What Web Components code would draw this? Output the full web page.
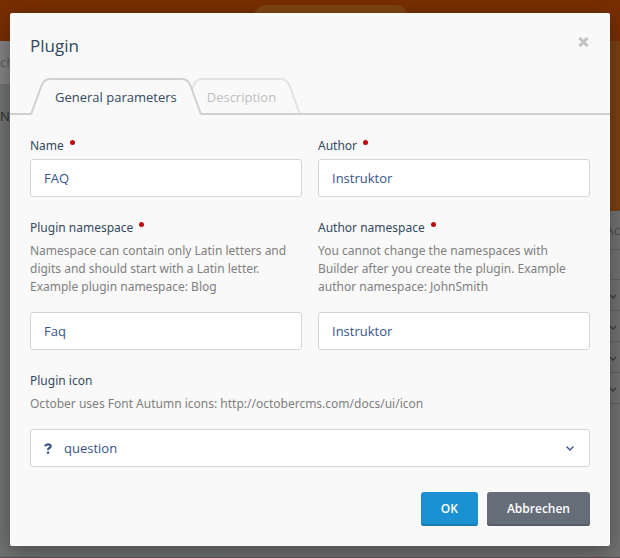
<!DOCTYPE html>
<html lang="en">
<head>
<meta charset="utf-8">
<title>Plugin</title>
<style>
  html, body { margin: 0; min-height: 100%; }
  body { font-family: "Open Sans", "Noto Sans", sans-serif; font-size: 12px; background: #6c6c6c; color: #405261; }
</style>
</head>
<body>
<plugin-page></plugin-page>

<template id="t-page">
  <style>
    :host { display: grid; min-height: 100vh; }
    backend-backdrop, .layer { grid-area: 1 / 1; min-width: 0; }
    .layer { padding: 13px 10px 12px; z-index: 1; }
    form { display: grid; gap: 21px; }
    .row { display: grid; grid-template-columns: 1fr 1fr; gap: 16px; }
  </style>
  <backend-backdrop></backend-backdrop>
  <div class="layer">
    <modal-dialog heading="Plugin">
      <tab-bar slot="tabs">
        <tab-item active>General parameters</tab-item>
        <tab-item>Description</tab-item>
      </tab-bar>
      <form>
        <div class="row">
          <text-field label="Name" value="FAQ" required></text-field>
          <text-field label="Author" value="Instruktor" required></text-field>
        </div>
        <div class="row">
          <text-field label="Plugin namespace" value="Faq" required
            help="Namespace can contain only Latin letters and digits and should start with a Latin letter. Example plugin namespace: Blog"></text-field>
          <text-field label="Author namespace" value="Instruktor" required
            help="You cannot change the namespaces with Builder after you create the plugin. Example author namespace: JohnSmith"></text-field>
        </div>
        <icon-field label="Plugin icon" value="question"
          help="October uses Font Autumn icons: http://octobercms.com/docs/ui/icon"></icon-field>
      </form>
      <action-button slot="actions" kind="primary">OK</action-button>
      <action-button slot="actions">Abbrechen</action-button>
    </modal-dialog>
  </div>
</template>

<template id="t-backdrop">
  <style>
    :host { display: grid; grid-template: 41px 1fr 1px / 228px 1fr; overflow: hidden; color: #3c3f3f; }
    header { grid-column: 1 / 3; background: #782f00; display: flex; justify-content: center; align-items: end; padding-left: 42px; }
    .nav { width: 154px; height: 36px; border-radius: 12px 12px 0 0; background: #7e4412; }
    aside { background: #707372; }
    .search { height: 43px; line-height: 42px; background: #838383; color: #5c5c5c; font-size: 13px; }
    .name { line-height: 64px; font-size: 13px; color: #2e3030; }
    section { background: #727272; }
    .banner { height: 170px; background: #7a4113; }
    .cell { height: 30px; border-bottom: 1px solid #626464; display: flex; justify-content: flex-end; align-items: center; }
    .head { height: 38px; font-size: 13px; color: #4b4d4d; }
    .blank { height: 29px; }
    svg { width: 8px; height: 6px; margin: 3px 3px 0 0; fill: none; stroke: #3c3f3f; stroke-width: 1.4; }
    footer { grid-column: 1 / 3; background: #5e4c57; }
  </style>
  <header><div class="nav"></div></header>
  <aside><div class="search">ch</div><div class="name">N</div></aside>
  <section>
    <div class="banner"></div>
    <div class="cell head">Ac</div>
    <div class="cell blank"></div>
    <div class="cell"><svg viewBox="0 0 8 6"><path d="M1 1l3 3 3-3"/></svg></div>
    <div class="cell"><svg viewBox="0 0 8 6"><path d="M1 1l3 3 3-3"/></svg></div>
    <div class="cell"><svg viewBox="0 0 8 6"><path d="M1 1l3 3 3-3"/></svg></div>
    <div class="cell"><svg viewBox="0 0 8 6"><path d="M1 1l3 3 3-3"/></svg></div>
  </section>
  <footer></footer>
</template>

<template id="t-modal">
  <style>
    :host { display: block; background: #f9f9f9; border-radius: 2px; box-shadow: 0 6px 22px rgba(0,0,0,.35); }
    header { display: flex; justify-content: space-between; align-items: flex-start; padding: 20px 20px 0; height: 45px; }
    h1 { margin: 0; font-size: 17px; line-height: 26px; font-weight: 400; color: #34495e; }
    .close { border: 0; background: none; padding: 3px 1px; line-height: 0; }
    .close svg { width: 11px; height: 12px; stroke: #c4c4c4; stroke-width: 3; }
    .body { padding: 21px 20px 0; }
    footer { display: flex; justify-content: flex-end; gap: 9px; padding: 25px 20px 20px; }
  </style>
  <header><h1></h1>
    <button class="close" type="button" aria-label="Close"><svg viewBox="0 0 11 12"><path d="M1.4 1.9l8.2 8.2M9.6 1.9l-8.2 8.2"/></svg></button>
  </header>
  <slot name="tabs"></slot>
  <div class="body"><slot></slot></div>
  <footer><slot name="actions"></slot></footer>
</template>

<template id="t-tabs">
  <style>
    :host { display: flex; padding-left: 21px; border-bottom: 2px solid #cfd1d1; height: 35px; }
    ::slotted(tab-item) { margin-right: -18px; }
  </style>
  <slot></slot>
</template>

<template id="t-tab">
  <style>
    :host { display: block; position: relative; height: 35px; overflow: hidden; --line: #e2e3e3; color: #bdbfbf; }
    :host([active]) { height: 37px; z-index: 1; --line: #cfd1d1; color: #34495e; }
    button { display: flex; height: 37px; padding: 0; border: 0; background: none; color: inherit; font: inherit; font-size: 13px; }
    span { box-sizing: border-box; height: 37px; line-height: 35px; border-top: 2px solid var(--line); background: #f9f9f9; white-space: nowrap; }
    svg { width: 24px; height: 37px; flex: none; }
    .fill { fill: #f9f9f9; }
    .edge { fill: none; stroke: var(--line); stroke-width: 2; }
  </style>
  <button type="button">
    <svg viewBox="0 0 24 37"><path class="fill" d="M0 37L10 8Q12.500 1 19 1H24V37z"/><path class="edge" d="M0 36.500L10 9Q12.500 1 19 1H24"/></svg>
    <span><slot></slot></span>
    <svg viewBox="0 0 24 37"><path class="fill" d="M24 37L14 8Q11.500 1 5 1H0V37z"/><path class="edge" d="M24 36.500L14 9Q11.500 1 5 1H0"/></svg>
  </button>
</template>

<template id="t-field">
  <style>
    :host { display: flex; flex-direction: column; min-width: 0; font-family: "Noto Sans", "Open Sans", sans-serif; }
    .label { display: flex; gap: 6px; line-height: 20px; color: #34495e; }
    .label i { width: 5px; height: 5px; margin-top: 4px; border-radius: 50%; background: #b80e12; }
    :host(:not([required])) i { display: none; }
    p { margin: 4px 0 13px; padding-right: 8px; line-height: 18px; color: #808080; }
    .box { margin-top: 3px; position: relative; }
    input, select { display: block; box-sizing: border-box; width: 100%; height: 38px; margin: 0; padding: 0 13px; border: 1px solid #d1d6d9; border-radius: 3px; background: #fff; color: #385487; font-family: "Open Sans", "Noto Sans", sans-serif; font-size: 13px; outline: 0; appearance: none; }
    select { padding-left: 33px; }
    .mark, .arrow { position: absolute; pointer-events: none; }
    .mark { left: 14px; top: 14px; width: 8px; height: 11px; fill: none; stroke: #385487; stroke-width: 2.2; }
    .arrow { right: 15px; top: 16px; width: 10px; height: 7px; fill: none; stroke: #385487; stroke-width: 1.3; }
  </style>
  <div class="label"><label for="control"></label><i></i></div>
  <p id="help"></p>
  <div class="box"></div>
</template>

<template id="t-button">
  <style>
    :host { display: block; --bg: #656d79; --edge: #555c67; }
    :host([kind="primary"]) { --bg: #1b91d2; --edge: #177cb4; }
    button { display: block; height: 34px; padding: 0 20px; border: 0; border-radius: 3px; background: var(--bg); box-shadow: inset 0 -2px 0 var(--edge); color: #fff; font: inherit; font-weight: 600; line-height: 34px; }
  </style>
  <button type="button"><slot></slot></button>
</template>

<script>
  class Base extends HTMLElement {
    constructor() {
      super();
      this.attachShadow({ mode: "open" })
        .append(document.getElementById(this.constructor.tpl).content.cloneNode(true));
    }
    $(selector) { return this.shadowRoot.querySelector(selector); }
  }
  class Backdrop extends Base { static tpl = "t-backdrop"; }
  class TabBar extends Base { static tpl = "t-tabs"; }
  class TabItem extends Base { static tpl = "t-tab"; }
  class ActionButton extends Base { static tpl = "t-button"; }
  class ModalDialog extends Base {
    static tpl = "t-modal";
    connectedCallback() { this.$("h1").textContent = this.getAttribute("heading"); }
  }
  class TextField extends Base {
    static tpl = "t-field";
    connectedCallback() {
      this.$("label").textContent = this.getAttribute("label");
      const help = this.getAttribute("help");
      if (help) this.$("p").textContent = help; else this.$("p").remove();
      this.$(".box").append(...this.control());
    }
    control() {
      const input = document.createElement("input");
      input.id = "control";
      input.type = "text";
      input.value = this.getAttribute("value");
      return [input];
    }
  }
  class IconField extends TextField {
    control() {
      const holder = document.createElement("template");
      holder.innerHTML = `<select id="control"><option>${this.getAttribute("value")}</option></select>
        <svg class="mark" viewBox="0 0 8 11"><path d="M1 3.200Q1.800 1.300 4 1.300Q6.700 1.300 6.700 3.300Q6.700 4.500 5.300 5.100Q4 5.700 4 7M4 8.600V10.800"/></svg>
        <svg class="arrow" viewBox="0 0 10 7"><path d="M1.500 1.500L5 5l3.500-3.500"/></svg>`;
      return [...holder.content.children];
    }
  }
  class PluginPage extends Base { static tpl = "t-page"; }

  customElements.define("backend-backdrop", Backdrop);
  customElements.define("tab-bar", TabBar);
  customElements.define("tab-item", TabItem);
  customElements.define("action-button", ActionButton);
  customElements.define("modal-dialog", ModalDialog);
  customElements.define("text-field", TextField);
  customElements.define("icon-field", IconField);
  customElements.define("plugin-page", PluginPage);
</script>
</body>
</html>
